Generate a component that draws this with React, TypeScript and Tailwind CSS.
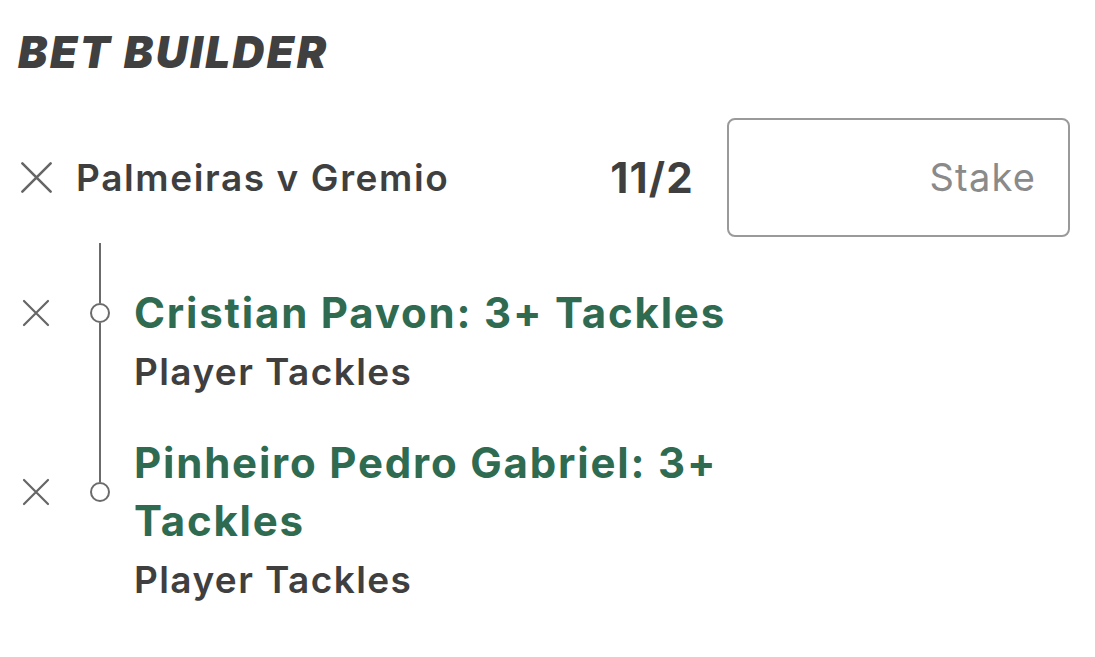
import React from 'react';

const font = { fontFamily: 'Inter, "Noto Sans", sans-serif' };

const Cross = ({ size, stroke }: { size: number; stroke: number }) => (
  <svg width={size} height={size} viewBox="0 0 28 28" fill="none">
    <path d="M2 2L26 26M26 2L2 26" stroke="#666666" strokeWidth={stroke} strokeLinecap="round" />
  </svg>
);

interface LegProps {
  title: string;
  market: string;
  last?: boolean;
  gap: number;
}

const Leg: React.FC<LegProps> = ({ title, market, last, gap }) => (
  <div className="grid grid-cols-[72px_56px_1fr]">
    {/* connector above the leg */}
    <div />
    <div className="flex justify-center" style={{ height: gap }}>
      <div className="w-[2px] bg-[#6b6b6b] h-full" />
    </div>
    <div />

    {/* selection row */}
    <div className="flex items-center justify-center">
      <Cross size={28} stroke={2.2} />
    </div>
    <div className="flex flex-col items-center">
      <div className="w-[2px] flex-1 bg-[#6b6b6b]" />
      <div className="w-[20px] h-[20px] rounded-full border-2 border-[#6b6b6b] bg-white shrink-0" />
      <div className={`w-[2px] flex-1 ${last ? '' : 'bg-[#6b6b6b]'}`} />
    </div>
    <div className="pl-[6px] pr-[8px] max-w-[630px] text-[42px] leading-[58px] font-bold tracking-[1.8px] text-[#2e6b51]">
      {title}
    </div>

    {/* market row */}
    <div />
    <div className="flex justify-center">
      {!last && <div className="w-[2px] bg-[#6b6b6b] h-full" />}
    </div>
    <div className="pl-[6px] pt-[8px] text-[37px] leading-[44px] font-semibold tracking-[1.4px] text-[#3f3f3f]">
      {market}
    </div>
  </div>
);

export default function App() {
  return (
    <div className="w-[1095px] h-[657px] bg-white overflow-hidden" style={font}>
      <div className="pl-[18px] pt-[31px] text-[44px] leading-[42px] font-black italic tracking-[2.5px] text-[#404040]">
        BET BUILDER
      </div>

      <div className="flex items-center mt-[45px] pr-[25px]">
        <div className="w-[72px] flex justify-center">
          <Cross size={33} stroke={2.2} />
        </div>
        <div className="flex-1 pl-[4px] text-[37px] leading-[44px] font-semibold tracking-[1.6px] text-[#3f3f3f]">
          Palmeiras v Gremio
        </div>
        <div className="mr-[33px] text-[42px] leading-[44px] font-bold tracking-[1.2px] text-[#3f3f3f]">11/2</div>
        <div className="w-[343px] h-[119px] border-2 border-[#9a9a9a] rounded-[8px] flex items-center justify-end pr-[32px]">
          <span className="text-[38px] tracking-[1.2px] text-[#8a8a8a]">Stake</span>
        </div>
      </div>

      <div className="pt-[6px]">
        <Leg title="Cristian Pavon: 3+ Tackles" market="Player Tackles" gap={41} />
        <Leg title="Pinheiro Pedro Gabriel: 3+ Tackles" market="Player Tackles" gap={40} last />
      </div>
    </div>
  );
}
